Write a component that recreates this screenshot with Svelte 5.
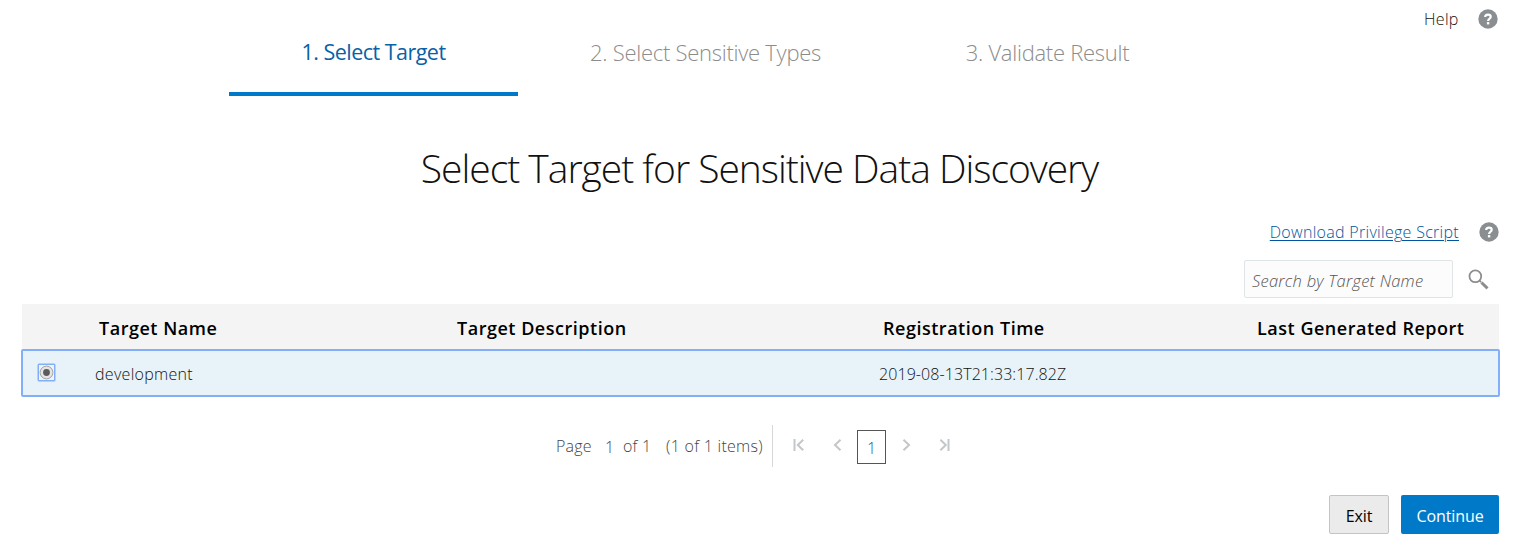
<script>
  const steps = ['1. Select Target', '2. Select Sensitive Types', '3. Validate Result'];
  const columns = ['Target Name', 'Target Description', 'Registration Time', 'Last Generated Report'];
  let selected = $state('development');
  let query = $state('');
</script>

{#snippet help()}
  <svg class="help" viewBox="0 0 20 20" aria-hidden="true">
    <circle cx="10" cy="10" r="9.7" fill="#8b8e91" />
    <path d="M7.2 8C7.2 6.3 8.4 5.6 10 5.6c1.7 0 2.7.9 2.7 2.2 0 1.9-2.6 2-2.6 4.2" fill="none" stroke="#fff" stroke-width="2.2" />
    <rect x="8.9" y="13.1" width="2.4" height="2.3" fill="#fff" />
  </svg>
{/snippet}

<main>
  <header>
    <nav>
      {#each steps as step, i}
        <div class="step s{i}" class:active={i === 0}><span>{step}</span></div>
      {/each}
    </nav>
    <div class="helplink"><span>Help</span>{@render help()}</div>
  </header>

  <h1><span>Select Target for Sensitive Data Discovery</span></h1>

  <div class="download"><a href="#script">Download Privilege Script</a>{@render help()}</div>

  <div class="search">
    <input placeholder="Search by Target Name" bind:value={query} />
    <svg viewBox="0 0 20 20" aria-hidden="true">
      <circle cx="7" cy="7" r="5.6" fill="none" stroke="#8b8e91" stroke-width="1.7" />
      <path d="M11 11l1.5 1.5" stroke="#8b8e91" stroke-width="1.6" />
      <path d="M12.8 12.8L18.6 18.4" stroke="#8b8e91" stroke-width="2.8" />
    </svg>
  </div>

  <section class="table">
    <div class="row head">
      <span></span>
      {#each columns as c, i}<b class="c{i}">{c}</b>{/each}
    </div>
    <div class="row item">
      <button class="radio" aria-label="Select target" onclick={() => (selected = 'development')}>
        <svg viewBox="0 0 15 15">
          <circle cx="7.5" cy="7.5" r="6.4" fill="#e4e4e4" stroke="#a5a5a5" />
          {#if selected}<circle cx="7.5" cy="7.5" r="3.4" fill="#5b5b5b" />{/if}
        </svg>
      </button>
      <span class="name">development</span><span></span>
      <span class="time">2019-08-13T21:33:17.82Z</span><span></span>
    </div>
  </section>

  <div class="pager">
    <span class="page">Page</span><span class="num">1</span><span class="of">of 1</span>
    <span class="items">(1 of 1 items)</span>
    <i></i>
    <svg class="first" viewBox="0 0 12 12"><path d="M1.5 0v12M10.2 .8L4.8 6l5.4 5.2" /></svg>
    <svg class="prev" viewBox="0 0 12 12"><path d="M8.5 .8L3 6l5.5 5.2" /></svg>
    <span class="current">1</span>
    <svg class="next" viewBox="0 0 12 12"><path d="M3.5 .8L9 6l-5.5 5.2" /></svg>
    <svg class="last" viewBox="0 0 12 12"><path d="M9.5 0v12M1.4 .8L6.8 6l-5.4 5.2" /></svg>
  </div>

  <footer>
    <button class="exit">Exit</button>
    <button class="continue">Continue</button>
  </footer>
</main>

<style>
  :global(body) { background: #fff; overflow: hidden; }
  * { box-sizing: border-box; }
  main {
    width: 1513px; height: 553px; padding: 0 14px 0 22px;
    font: 300 16px/22px "Open Sans", sans-serif; color: #111;
  }
  span, b, a { white-space: nowrap; }
  header { height: 96px; display: flex; padding-left: 207px; justify-content: space-between; }
  nav { display: flex; }
  .step {
    width: 289px; height: 96px; padding-top: 37px; text-align: center;
    font-size: 22px; line-height: 30px; color: #8c8c8c; border-bottom: 4px solid transparent;
    letter-spacing: -.27px;
  }
  .s1 { margin-left: 43px; }
  .s2 { margin-left: 53px; }
  .step.active { color: #0961a7; font-weight: 400; font-size: 21.5px; letter-spacing: -.52px; border-color: #007ac8; }
  .helplink { display: flex; width: 75px; height: 22px; margin-top: 8px; padding-right: 1px; justify-content: space-between; align-items: center; letter-spacing: .3px; }
  .help { width: 20px; height: 20px; flex: none; display: block; }
  h1 { height: 54px; margin: 45px 2px 0 0; text-align: center; font-weight: 300; font-size: 39px; line-height: 54px; letter-spacing: -1.02px; }
  .download { height: 22px; margin-top: 26px; display: flex; justify-content: flex-end; align-items: center; gap: 20px; }
  .download a { color: #00559e; letter-spacing: .3px; text-underline-offset: 2px; text-decoration-thickness: 1px; }
  .search { height: 38px; margin-top: 17px; display: flex; justify-content: flex-end; padding-right: 10px; gap: 15px; align-items: center; }
  input {
    width: 209px; height: 38px; padding: 3px 7px 0; background: #fcfcfc; border: 1px solid #dfe4e7; border-radius: 2px;
    font: italic 300 16.5px "Open Sans", sans-serif; letter-spacing: .25px; outline: 0;
  }
  input::placeholder { color: #555; opacity: 1; }
  .search svg { width: 21px; height: 21px; }
  .table { margin-top: 6px; }
  .row { display: grid; grid-template-columns: 73px 358px 426px 374px 1fr; align-items: center; width: 1477px; }
  .head { height: 45px; background: #f4f4f4; color: #000; padding-top: 3px; }
  .head b { font-weight: 600; font-size: 18px; padding-left: 4px; letter-spacing: .52px; }
  .item { height: 48px; width: 1479px; margin-left: -1px; padding: 0; border: 2px solid #83aef9; border-radius: 2px; background: #e8f3f9; }
  .item > span { padding-top: 1px; margin-left: -1px; }
  .name { letter-spacing: .3px; }
  .time { letter-spacing: .08px; }
  .item > :nth-child(1) { margin-left: 15px; }
  .radio { width: 17px; height: 17px; padding: 0; border: 1px solid #83aef9; background: #eef3f9; box-shadow: 0 0 0 .5px #83aef9; border-radius: 1px; display: block; margin-top: -2px; }
  .radio svg { display: block; width: 15px; height: 15px; }
  .pager { height: 42px; margin-top: 28px; padding-left: 534px; display: flex; align-items: center; color: #444; }
  .page { width: 36px; letter-spacing: .2px; }
  .num { margin-left: 13px; width: 9px; padding-top: 2px; }
  .of { margin-left: 9px; width: 28px; letter-spacing: .2px; }
  .items { margin-left: 15px; width: 98px; letter-spacing: .28px; }
  .pager i { width: 1px; height: 42px; background: #d6d7d8; margin-left: 8px; }
  .pager svg { width: 12px; height: 12px; fill: none; stroke: #c4c7c9; stroke-width: 2; margin-top: -2px; }
  .pager .first { margin-left: 20px; }
  .pager .prev { margin-left: 27px; }
  .current { width: 29px; height: 34px; border: 1px solid #555; margin: 2px 0 0 13px; text-align: center; line-height: 34px; color: #145c9e; }
  .pager .next { margin-left: 14px; }
  .pager .last { margin-left: 27px; }
  footer { display: flex; justify-content: flex-end; gap: 12px; margin-top: 28px; }
  footer button { height: 39px; padding: 3px 0 0; border-radius: 2px; font: 400 16px "Open Sans", sans-serif; letter-spacing: -.1px; }
  .exit { width: 60px; background: #ebebeb; border: 1px solid #c4c4c4; color: #000; }
  .continue { width: 98px; background: #007ac8; border: 0; color: #fff; }
</style>
